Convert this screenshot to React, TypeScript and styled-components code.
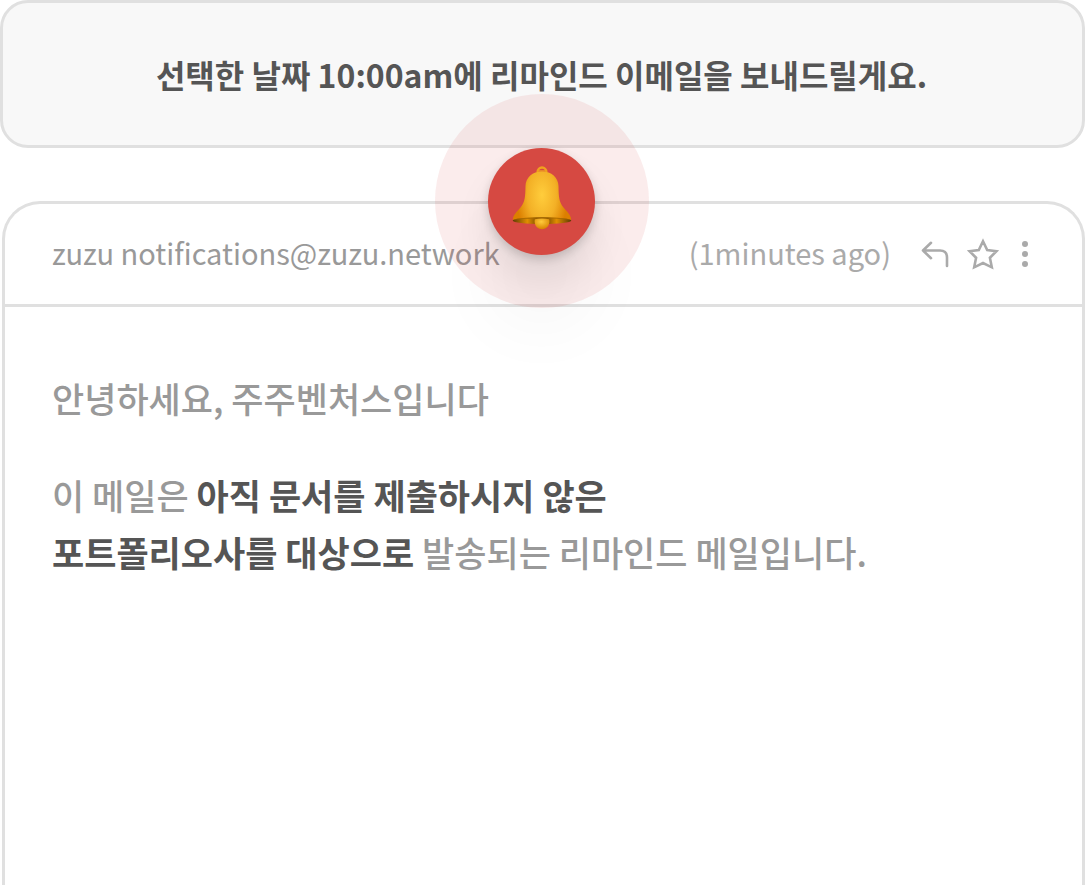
import React from "react";
import styled, { createGlobalStyle } from "styled-components";

const line = "#e0e0e0";

const GlobalStyle = createGlobalStyle`
  *, *::before, *::after { box-sizing: border-box; }
  body {
    margin: 0;
    background: #fff;
    color: #999;
    font-family: "Noto Sans CJK KR", "Noto Sans", sans-serif;
  }
`;

const Page = styled.main`
  display: flex;
  flex-direction: column;
  min-height: 100vh;
`;

const Notice = styled.section`
  position: relative;
  display: flex;
  align-items: center;
  justify-content: center;
  min-height: 148px;
  padding: 0 26px 0 24px;
  border: 3px solid ${line};
  border-radius: 28px;
  background: #f8f8f8;
`;

const NoticeText = styled.p`
  margin: 0;
  color: #555;
  font-size: 32px;
  font-weight: 700;
  line-height: 48px;
  text-align: center;
`;

const Halo = styled.div`
  position: absolute;
  z-index: 1;
  top: 91px;
  left: 50%;
  display: flex;
  align-items: center;
  justify-content: center;
  width: 214px;
  height: 214px;
  margin-left: -108px;
  border-radius: 50%;
  background: rgba(214, 73, 70, 0.1);
  pointer-events: none;
`;

const Badge = styled.div`
  display: flex;
  justify-content: center;
  width: 107px;
  height: 107px;
  padding-top: 17px;
  border-radius: 50%;
  background: #d64942;
  box-shadow: 0 4px 10px rgba(0, 0, 0, 0.16), 0 24px 36px rgba(0, 0, 0, 0.08),
    0 72px 72px rgba(0, 0, 0, 0.04);
`;

const Mail = styled.article`
  flex: 1;
  margin: 53px 0 0 2px;
  border: 3px solid ${line};
  border-bottom: 0;
  border-radius: 38px 38px 0 0;
`;

const MailHeader = styled.header`
  display: flex;
  align-items: center;
  justify-content: space-between;
  min-height: 103px;
  padding: 0 45px 4px 47px;
  border-bottom: 3px solid ${line};
  font-size: 29px;
  line-height: 44px;
`;

const Meta = styled.div`
  display: flex;
  align-items: center;
  gap: 26px;
  color: #aaa;
`;

const Actions = styled.div`
  display: flex;
  align-items: center;
  gap: 12px;
  padding-top: 4px;
`;

const IconButton = styled.button<{ $width: number }>`
  display: flex;
  align-items: center;
  justify-content: center;
  width: ${({ $width }) => $width}px;
  height: 36px;
  padding: 0;
  border: 0;
  background: none;
  color: inherit;
  cursor: pointer;
`;

const MailBody = styled.div`
  padding: 62px 47px;
  font-size: 35px;
  font-weight: 500;
  line-height: 57px;
`;

const Paragraph = styled.p`
  margin: 0 0 40px;

  strong {
    color: #555;
    font-weight: 700;
  }
`;

function BellIcon() {
  return (
    <svg width="60" height="66" viewBox="0 0 60 66" aria-hidden="true">
      <defs>
        <radialGradient id="bell" gradientUnits="userSpaceOnUse" cx="30" cy="30" r="32" gradientTransform="translate(30 30) scale(1 1.8) translate(-30 -30)">
          <stop offset="0" stopColor="#ffcd3c" />
          <stop offset="0.45" stopColor="#f3b026" />
          <stop offset="0.8" stopColor="#dc7f00" />
          <stop offset="1" stopColor="#dc7f00" />
        </radialGradient>
        <linearGradient id="rim" x1="0" x2="1">
          <stop offset="0" stopColor="#5e3a04" />
          <stop offset="0.25" stopColor="#e08e00" />
          <stop offset="0.4" stopColor="#8a5600" />
          <stop offset="0.6" stopColor="#8a5600" />
          <stop offset="0.75" stopColor="#e08e00" />
          <stop offset="1" stopColor="#5e3a04" />
        </linearGradient>
        <radialGradient id="clapper" cx="0.45" cy="0.3" r="0.7">
          <stop offset="0" stopColor="#ffcb3c" />
          <stop offset="1" stopColor="#d98300" />
        </radialGradient>
      </defs>
      <path d="M25.500 7.500C25.500 0.800 34.500 0.800 34.500 7.500" fill="none" stroke="#f0a11d" strokeWidth="2.4" />
      <path d="M27 6h6" stroke="#f0a11d" strokeWidth="1.4" />
      <path
        d="M30 6.500C20.500 6.500 13.700 12.500 13.500 21C13.300 32 13 37 8.500 42.500C5 47 1.500 49 .8 54.500C8 58.500 52 58.500 59.200 54.500C58.500 49 55 47 51.500 42.500C47 37 46.700 32 46.500 21C46.300 12.500 39.500 6.500 30 6.500Z"
        fill="url(#bell)"
      />
      <ellipse cx="30" cy="55.600" rx="29.300" ry="3.400" fill="url(#rim)" />
      <path d="M.8 54.800C8 51.600 52 51.600 59.200 54.800C48 53.200 12 53.200.8 54.800Z" fill="#a86800" />
      <path d="M22.800 54.300C27 53.300 33 53.300 37.200 54.300C39.600 67.500 20.400 67.500 22.800 54.300Z" fill="url(#clapper)" />
    </svg>
  );
}

function ReplyIcon() {
  return (
    <svg width="28" height="28" viewBox="0 0 28 28" fill="none" stroke="currentColor" strokeWidth="2.6" strokeLinecap="round" strokeLinejoin="round" aria-hidden="true">
      <path d="M10 2.800L2 10.500L10 18.200M2 10.500H19Q26 10.500 26 17.500V26" />
    </svg>
  );
}

function StarIcon() {
  return (
    <svg width="32" height="32" viewBox="0 0 32 32" fill="none" stroke="currentColor" strokeWidth="2.600" aria-hidden="true">
      <path d="M16 3.300L20.200 12L29.500 13.200L22.900 19.700L24.800 29.300L16 25L7.200 29.300L9.100 19.700L2.500 13.200L11.800 12Z" />
    </svg>
  );
}

function MoreIcon() {
  return (
    <svg width="6" height="28" viewBox="0 0 6 28" fill="currentColor" aria-hidden="true">
      <circle cx="3" cy="4" r="3" />
      <circle cx="3" cy="14" r="3" />
      <circle cx="3" cy="24" r="3" />
    </svg>
  );
}

export default function App() {
  return (
    <>
      <GlobalStyle />
      <Page>
        <Notice>
          <NoticeText>선택한 날짜 10:00am에 리마인드 이메일을 보내드릴게요.</NoticeText>
          <Halo>
            <Badge>
              <BellIcon />
            </Badge>
          </Halo>
        </Notice>
        <Mail>
          <MailHeader>
            <span>zuzu notifications@zuzu.network</span>
            <Meta>
              <span>(1minutes ago)</span>
              <Actions>
                <IconButton $width={36} type="button" aria-label="Reply">
                  <ReplyIcon />
                </IconButton>
                <IconButton $width={36} type="button" aria-label="Star">
                  <StarIcon />
                </IconButton>
                <IconButton $width={24} type="button" aria-label="More">
                  <MoreIcon />
                </IconButton>
              </Actions>
            </Meta>
          </MailHeader>
          <MailBody>
            <Paragraph>안녕하세요, 주주벤처스입니다</Paragraph>
            <Paragraph>
              이 메일은 <strong>아직 문서를 제출하시지 않은</strong>
              <br />
              <strong>포트폴리오사를 대상으로</strong> 발송되는 리마인드 메일입니다.
            </Paragraph>
          </MailBody>
        </Mail>
      </Page>
    </>
  );
}
